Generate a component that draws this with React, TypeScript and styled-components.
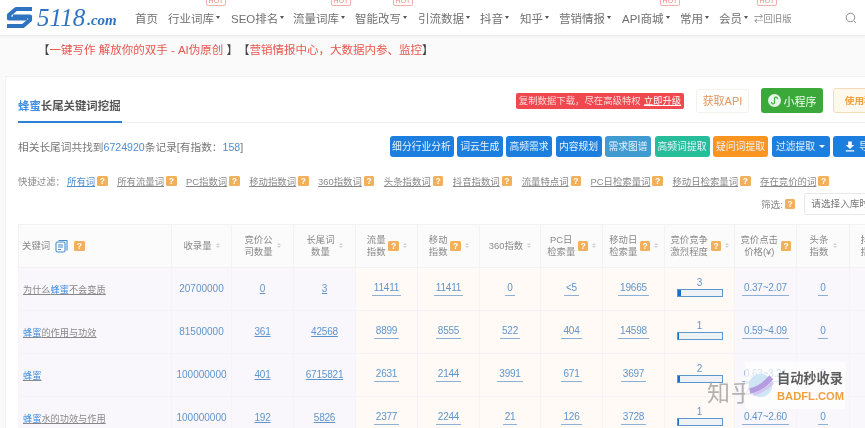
import React from 'react';
import styled, { createGlobalStyle } from 'styled-components';

const GlobalStyle = createGlobalStyle`
  html, body {
    margin: 0;
    padding: 0;
    background: #fafafa;
  }
  body {
    width: 865px;
    height: 428px;
    overflow: hidden;
    font-family: "Liberation Sans", "Noto Sans CJK SC", sans-serif;
  }
  * {
    box-sizing: border-box;
  }
`;

const Page = styled.div`
  position: relative;
  width: 865px;
  height: 428px;
  overflow: hidden;
  filter: blur(0.35px);
`;

const Header = styled.header`
  display: flex;
  align-items: center;
  height: 36px;
  padding-left: 6px;
  background: #fff;
  border-bottom: 1px solid #eeeeee;
  box-shadow: 0 1px 2px rgba(0, 0, 0, 0.04);
`;

const Logo = styled.div`
  display: flex;
  align-items: center;
  width: 129px;
  flex-shrink: 0;
  color: #2f74c0;
  font-family: "Liberation Serif", serif;
  font-style: italic;
  white-space: nowrap;
`;

const LogoNum = styled.span`
  font-size: 25px;
  margin-left: 4px;
`;

const LogoCom = styled.span`
  font-size: 15px;
  font-weight: 700;
  margin: 6px 0 0 2px;
`;

const Nav = styled.nav`
  display: flex;
  align-items: center;
  color: #707070;
  font-size: 11.5px;
  white-space: nowrap;
`;

const NavItem = styled.span<{ $w: number }>`
  position: relative;
  display: flex;
  align-items: center;
  width: ${p => p.$w}px;
`;

const Caret = styled.i`
  display: inline-block;
  margin-left: 2px;
  border-top: 3px solid #555;
  border-left: 2.5px solid transparent;
  border-right: 2.5px solid transparent;
`;

const Hot = styled.b`
  position: absolute;
  top: -14px;
  left: 38px;
  width: 20px;
  height: 10px;
  border: 1px solid #f0b0a8;
  border-radius: 2px;
  color: #ec8a80;
  font-size: 7px;
  font-weight: 400;
  line-height: 8px;
  text-align: center;
`;

const OldLink = styled.span`
  display: flex;
  align-items: center;
  width: 91px;
  color: #8a8a8a;
  font-size: 9.4px;
`;

const Banner = styled.div`
  height: 40px;
  padding: 7px 0 0 38px;
  color: #444;
  font-size: 11.5px;
  line-height: 15px;
  white-space: nowrap;
`;

const Red = styled.span`
  color: #e8554d;
`;

const BracketGap = styled.span`
  display: inline-block;
  width: 0;
`;

const Card = styled.section`
  width: 1000px;
  height: 400px;
  margin-left: 5px;
  padding: 0 109px 0 12px;
  background: #fff;
  border: 1px solid #f1f1f1;
`;

const TitleRow = styled.div`
  display: flex;
  align-items: center;
  justify-content: space-between;
  height: 46px;
  border-bottom: 1px solid #f0f0f0;
`;

const Tab = styled.h2`
  align-self: flex-end;
  height: 33px;
  margin: 0 0 -1px;
  width: 104px;
  border-bottom: 2px solid #2f7fd6;
  color: #555;
  font-size: 11.4px;
  font-weight: 700;
  line-height: 32px;
  white-space: nowrap;
`;

const Hl = styled.span`
  color: #3f8ee0;
`;

const TitleTools = styled.div`
  display: flex;
  align-items: center;
  margin-top: 2px;
`;

const Upgrade = styled.div`
  width: 168px;
  height: 16px;
  margin-right: 12px;
  background: #f0484f;
  border-radius: 2px;
  color: #ffd9d9;
  font-size: 9.4px;
  line-height: 16px;
  text-align: center;
  white-space: nowrap;

  u {
    color: #fff;
    margin-left: 3px;
  }
`;

const ApiBtn = styled.div`
  width: 53px;
  height: 24px;
  margin-right: 12px;
  background: #fff;
  border: 1px solid #f5f1ec;
  border-radius: 3px;
  color: #e2965c;
  font-size: 11px;
  line-height: 22px;
  text-align: center;
`;

const GreenBtn = styled.div`
  display: flex;
  align-items: center;
  justify-content: center;
  gap: 3px;
  width: 62px;
  height: 25px;
  margin-right: 10px;
  background: #3aa93a;
  border-radius: 3px;
  color: #f1fff1;
  font-size: 11px;
`;

const MiniIcon = styled.svg`
  width: 13px;
  height: 13px;
`;

const GuideBtn = styled.div`
  width: 62px;
  height: 25px;
  background: #fff8ec;
  border: 1px solid #f5dcb8;
  border-radius: 3px;
  color: #f0a040;
  font-size: 9.6px;
  font-weight: 700;
  line-height: 23px;
  text-align: center;
`;

const CountRow = styled.div`
  display: flex;
  align-items: center;
  justify-content: space-between;
  height: 22px;
  margin-top: 12px;
  margin-right: 4px;
  color: #777;
  font-size: 10.7px;
  white-space: nowrap;
`;

const Num = styled.span`
  color: #4b8fd1;
  font-size: 10.6px;
`;

const Buttons = styled.div`
  display: flex;
  gap: 3.5px;
`;

const Btn = styled.div<{ $w: number; $bg?: string }>`
  display: flex;
  align-items: center;
  justify-content: center;
  gap: 4px;
  width: ${p => p.$w}px;
  height: 21px;
  background: ${p => p.$bg || '#1c7fe0'};
  border-radius: 3px;
  color: #e8f3ff;
  font-size: 9.8px;
`;

const BtnCaret = styled.i`
  border-top: 3px solid #fff;
  border-left: 3px solid transparent;
  border-right: 3px solid transparent;
`;

const QuickRow = styled.div`
  display: flex;
  align-items: center;
  height: 14px;
  margin-top: 17px;
  color: #888;
  font-size: 9.4px;
  white-space: nowrap;
`;

const QuickLabel = styled.span`
  width: 49px;
`;

const QuickItem = styled.span<{ $active?: boolean }>`
  display: flex;
  align-items: center;
  margin-right: 9.5px;

  a {
    color: ${p => (p.$active ? '#4b8fd1' : '#888')};
    text-decoration: underline;
  }
`;

const Help = styled.i`
  display: inline-block;
  flex-shrink: 0;
  width: 10.5px;
  height: 10px;
  margin-left: 2px;
  background: #f2b05a;
  border-radius: 1.5px;
  color: #fff;
  font-family: "Liberation Sans", sans-serif;
  font-size: 8.5px;
  font-style: normal;
  font-weight: 700;
  line-height: 10px;
  text-align: center;
  vertical-align: middle;
`;

const PickRow = styled.div`
  display: flex;
  align-items: center;
  height: 23px;
  margin-top: 4px;
  padding-left: 743px;
  color: #888;
  font-size: 9.6px;
  white-space: nowrap;
`;

const Select = styled.div`
  width: 120px;
  height: 22px;
  margin-left: 9px;
  padding-left: 6px;
  background: #fff;
  border: 1px solid #e8e8e8;
  border-radius: 2px;
  color: #777;
  line-height: 20px;
`;

const TableWrap = styled.div`
  width: 880px;
  margin-top: 8.5px;
`;

const Table = styled.table`
  width: 880px;
  table-layout: fixed;
  border-collapse: collapse;
  font-size: 9.4px;
`;

const Th = styled.th`
  height: 43px;
  padding: 0 3px;
  background: #fbfbfb;
  border: 1px solid #f2f2f2;
  color: #888;
  font-weight: 400;
  line-height: 12px;
  text-align: center;
`;

const ThInner = styled.div<{ $left?: boolean }>`
  display: flex;
  align-items: center;
  justify-content: ${p => (p.$left ? 'flex-start' : 'center')};
`;

const ThLabel = styled.span<{ $w?: number }>`
  ${p => (p.$w ? `width: ${p.$w}px;` : 'white-space: nowrap;')}
`;

const Sort = styled.i`
  display: inline-flex;
  flex-direction: column;
  gap: 1.5px;
  margin-left: 4px;

  &::before,
  &::after {
    content: '';
    border-left: 2px solid transparent;
    border-right: 2px solid transparent;
  }
  &::before {
    border-bottom: 2.5px solid #d2d2d2;
  }
  &::after {
    border-top: 2.5px solid #d2d2d2;
  }
`;

const ListIcon = styled.svg`
  width: 13px;
  height: 14px;
  margin: 0 4px 0 5px;
`;

const Td = styled.td<{ $warm?: boolean; $left?: boolean }>`
  height: 43px;
  padding: ${p => (p.$left ? '0 0 0 4px' : '0')};
  background: ${p => (p.$warm ? '#fffaf5' : '#faf7fc')};
  border: 1px solid #f6f3f6;
  color: #5f95cc;
  font-size: 10px;
  text-align: ${p => (p.$left ? 'left' : 'center')};
  white-space: nowrap;
`;

const KeywordLink = styled.a`
  color: #888;
  font-size: 9.2px;
  text-decoration: underline;

  span {
    color: #3f8ee0;
  }
`;

const CellLink = styled.a`
  color: #5f95cc;
  letter-spacing: -0.2px;
  text-decoration: underline;
`;

const IndexLink = styled.a`
  display: inline-block;
  padding: 0 2px 2px;
  border-bottom: 1px solid #8eb0d4;
  color: #5f95cc;
  letter-spacing: -0.2px;
`;

const BarBox = styled.div`
  width: 46px;
  margin: -4px auto 0;
  line-height: 12px;
`;

const BarTrack = styled.div`
  height: 8px;
  background: #eef1f5;
  border: 1px solid #5d97cf;
`;

const BarFill = styled.div<{ $w: number }>`
  width: ${p => p.$w}px;
  height: 100%;
  background: #1c6fc8;
`;

const Watermark = styled.div`
  position: absolute;
  left: 745px;
  top: 362px;
  display: flex;
  align-items: center;
  width: 100px;
  height: 47px;
  background: rgba(255, 255, 255, 0.72);
`;

const WmBall = styled.svg`
  width: 27px;
  height: 27px;
  margin-left: 2px;
`;

const WmText = styled.div`
  margin-left: 3px;
  white-space: nowrap;
`;

const WmTop = styled.div`
  color: #5c5c5c;
  font-size: 13.2px;
  font-weight: 700;
  line-height: 20px;
`;

const WmBottom = styled.div`
  color: #eda23e;
  font-size: 11.2px;
  font-weight: 700;
  line-height: 14px;
`;

const Zhihu = styled.div`
  position: absolute;
  left: 707px;
  top: 380px;
  color: rgba(165, 165, 165, 0.85);
  font-size: 23px;
  line-height: 26px;
  letter-spacing: 1px;
`;

const navItems = [
  { label: '首页', w: 33, caret: false, hot: false },
  { label: '行业词库', w: 63, caret: true, hot: true },
  { label: 'SEO排名', w: 62, caret: true, hot: false },
  { label: '流量词库', w: 62, caret: true, hot: true },
  { label: '智能改写', w: 63, caret: true, hot: true },
  { label: '引流数据', w: 62, caret: true, hot: false },
  { label: '抖音', w: 40, caret: true, hot: false },
  { label: '知乎', w: 39, caret: true, hot: false },
  { label: '营销情报', w: 63, caret: true, hot: false },
  { label: 'API商城', w: 58, caret: true, hot: true },
  { label: '常用', w: 39, caret: true, hot: false },
  { label: '会员', w: 35, caret: true, hot: true },
];

const buttons = [
  { label: '细分行业分析', w: 64 },
  { label: '词云生成', w: 45.5 },
  { label: '高频需求', w: 46 },
  { label: '内容规划', w: 46 },
  { label: '需求图谱', w: 46, bg: '#3f9bd0' },
  { label: '高频词提取', w: 55, bg: '#26bd9a' },
  { label: '疑问词提取', w: 55, bg: '#fb9420' },
];

const quickFilters = ['所有词', '所有流量词', 'PC指数词', '移动指数词', '360指数词', '头条指数词', '抖音指数词', '流量特点词', 'PC日检索量词', '移动日检索量词', '存在竞价的词'];

const colWidths = [153, 60, 62, 62, 62, 62, 61, 62, 62, 70, 62, 53, 49];

const columns = [
  { label: '收录量', help: false },
  { label: '竞价公司数量', w: 29, help: false },
  { label: '长尾词数量', w: 29, help: false },
  { label: '流量指数', w: 20, help: true },
  { label: '移动指数', w: 20, help: true },
  { label: '360指数', help: false },
  { label: 'PC日检索量', w: 29, help: true },
  { label: '移动日检索量', w: 29, help: true },
  { label: '竞价竞争激烈程度', w: 39, help: true },
  { label: '竞价点击价格(¥)', w: 39, help: true, noSort: true },
  { label: '头条指数', w: 20, help: false },
  { label: '抖音指数', w: 20, help: false },
];

const rows = [
  { pre: '为什么', post: '不会变质', shoulu: '20700000', bid: '0', tail: '3', flow: '11411', mobile: '11411', i360: '0', pc: '<5', md: '19665', level: 3, fill: 3, price: '0.37~2.07', tt: '0' },
  { pre: '', post: '的作用与功效', shoulu: '81500000', bid: '361', tail: '42568', flow: '8899', mobile: '8555', i360: '522', pc: '404', md: '14598', level: 1, fill: 1, price: '0.59~4.09', tt: '0' },
  { pre: '', post: '', shoulu: '100000000', bid: '401', tail: '6715821', flow: '2631', mobile: '2144', i360: '3991', pc: '671', md: '3697', level: 2, fill: 2, price: '0.63~3.21', tt: '0' },
  { pre: '', post: '水的功效与作用', shoulu: '100000000', bid: '192', tail: '5826', flow: '2377', mobile: '2244', i360: '21', pc: '126', md: '3728', level: 1, fill: 1, price: '0.47~2.60', tt: '0' },
];

export default function App() {
  return (
    <Page>
      <GlobalStyle />
      <Header>
        <Logo>
          <svg width="27" height="23" viewBox="0 0 27 23" fill="none" stroke="#2f74c0" strokeWidth="4.2">
            <path d="M26 3H10L3 9V12.5H21" strokeLinejoin="round" />
            <path d="M1 20H17L24 14V10.5H7" strokeLinejoin="round" />
          </svg>
          <LogoNum>5118</LogoNum>
          <LogoCom>.com</LogoCom>
        </Logo>
        <Nav>
          {navItems.map(item => (
            <NavItem key={item.label} $w={item.w}>
              {item.label}
              {item.caret && <Caret />}
              {item.hot && <Hot>HOT</Hot>}
            </NavItem>
          ))}
          <OldLink>⇄回旧版</OldLink>
          <svg width="12" height="12" viewBox="0 0 24 24" fill="none" stroke="#8a8a8a" strokeWidth="2">
            <circle cx="11" cy="11" r="8.5" />
            <path d="M17.5 17.5L22 22" />
          </svg>
        </Nav>
      </Header>

      <Banner>
        【<Red>一键写作 解放你的双手 - AI伪原创</Red> 】<BracketGap />【<Red>营销情报中心，大数据内参、监控</Red>】
      </Banner>

      <Card>
        <TitleRow>
          <Tab><Hl>蜂蜜</Hl>长尾关键词挖掘</Tab>
          <TitleTools>
            <Upgrade>复制数据下载，尽在高级特权<u>立即升级</u></Upgrade>
            <ApiBtn>获取API</ApiBtn>
            <GreenBtn>
              <MiniIcon viewBox="0 0 14 14">
                <circle cx="7" cy="7" r="7" fill="#e6f3e6" />
                <path d="M4 8.5a1.6 1.6 0 1 0 3 0V5.5a1.6 1.6 0 1 1 3 0" fill="none" stroke="#3aa93a" strokeWidth="1.2" />
              </MiniIcon>
              小程序
            </GreenBtn>
            <GuideBtn>使用教程</GuideBtn>
          </TitleTools>
        </TitleRow>

        <CountRow>
          <span>
            相关长尾词共找到<Num>6724920</Num>条记录[有指数：<Num>158</Num>]
          </span>
          <Buttons>
            {buttons.map(b => (
              <Btn key={b.label} $w={b.w} $bg={b.bg}>{b.label}</Btn>
            ))}
            <Btn $w={58}>过滤提取<BtnCaret /></Btn>
            <Btn $w={58}>
              <svg width="10" height="11" viewBox="0 0 10 11" fill="#fff">
                <path d="M3.2 0.5h3.6v3.5h2.4L5 8 0.8 4h2.4zM0.8 9.2h8.4v1.3H0.8z" />
              </svg>
              导出
            </Btn>
          </Buttons>
        </CountRow>

        <QuickRow>
          <QuickLabel>快捷过滤：</QuickLabel>
          {quickFilters.map((q, i) => (
            <QuickItem key={q} $active={i === 0}>
              <a>{q}</a>
              <Help>?</Help>
            </QuickItem>
          ))}
        </QuickRow>

        <PickRow>
          筛选:<Help>?</Help>
          <Select>请选择入库时间</Select>
        </PickRow>

        <TableWrap>
          <Table>
            <colgroup>
              {colWidths.map((w, i) => <col key={i} style={{ width: w }} />)}
            </colgroup>
            <thead>
              <tr>
                <Th>
                  <ThInner $left>
                    关键词
                    <ListIcon viewBox="0 0 13 14" fill="none" stroke="#4b8fd1" strokeWidth="1.1">
                      <path d="M3.5 1.5h8.5v10" />
                      <rect x="1" y="3" width="9" height="10" rx="1.5" />
                      <path d="M3 6h5M3 8h5M3 10.5h3" />
                    </ListIcon>
                    <Help>?</Help>
                  </ThInner>
                </Th>
                {columns.map(c => (
                  <Th key={c.label}>
                    <ThInner>
                      <ThLabel $w={c.w}>{c.label}</ThLabel>
                      {c.help && <Help>?</Help>}
                      {!c.noSort && <Sort />}
                    </ThInner>
                  </Th>
                ))}
              </tr>
            </thead>
            <tbody>
              {rows.map((r, i) => (
                <tr key={i}>
                  <Td $left>
                    <KeywordLink>{r.pre}<span>蜂蜜</span>{r.post}</KeywordLink>
                  </Td>
                  <Td>{r.shoulu}</Td>
                  <Td><CellLink>{r.bid}</CellLink></Td>
                  <Td><CellLink>{r.tail}</CellLink></Td>
                  <Td $warm><IndexLink>{r.flow}</IndexLink></Td>
                  <Td $warm><IndexLink>{r.mobile}</IndexLink></Td>
                  <Td $warm><IndexLink>{r.i360}</IndexLink></Td>
                  <Td $warm><IndexLink>{r.pc}</IndexLink></Td>
                  <Td $warm><IndexLink>{r.md}</IndexLink></Td>
                  <Td $warm>
                    <BarBox>
                      {r.level}
                      <BarTrack><BarFill $w={r.fill} /></BarTrack>
                    </BarBox>
                  </Td>
                  <Td><IndexLink>{r.price}</IndexLink></Td>
                  <Td><IndexLink>{r.tt}</IndexLink></Td>
                  <Td>{i === 2 && <CellLink>3</CellLink>}</Td>
                </tr>
              ))}
            </tbody>
          </Table>
        </TableWrap>
      </Card>

      <Zhihu>知乎</Zhihu>
      <Watermark>
        <WmBall viewBox="0 0 30 30">
          <circle cx="15" cy="15" r="13" fill="#cfe6f5" />
          <path d="M3 21C12 20 20 14 27 6" stroke="#b59be0" strokeWidth="6" fill="none" />
          <path d="M7 25C15 23 23 18 29 12" stroke="#d5c4f0" strokeWidth="3" fill="none" />
        </WmBall>
        <WmText>
          <WmTop>自动秒收录</WmTop>
          <WmBottom>BADFL.COM</WmBottom>
        </WmText>
      </Watermark>
    </Page>
  );
}
